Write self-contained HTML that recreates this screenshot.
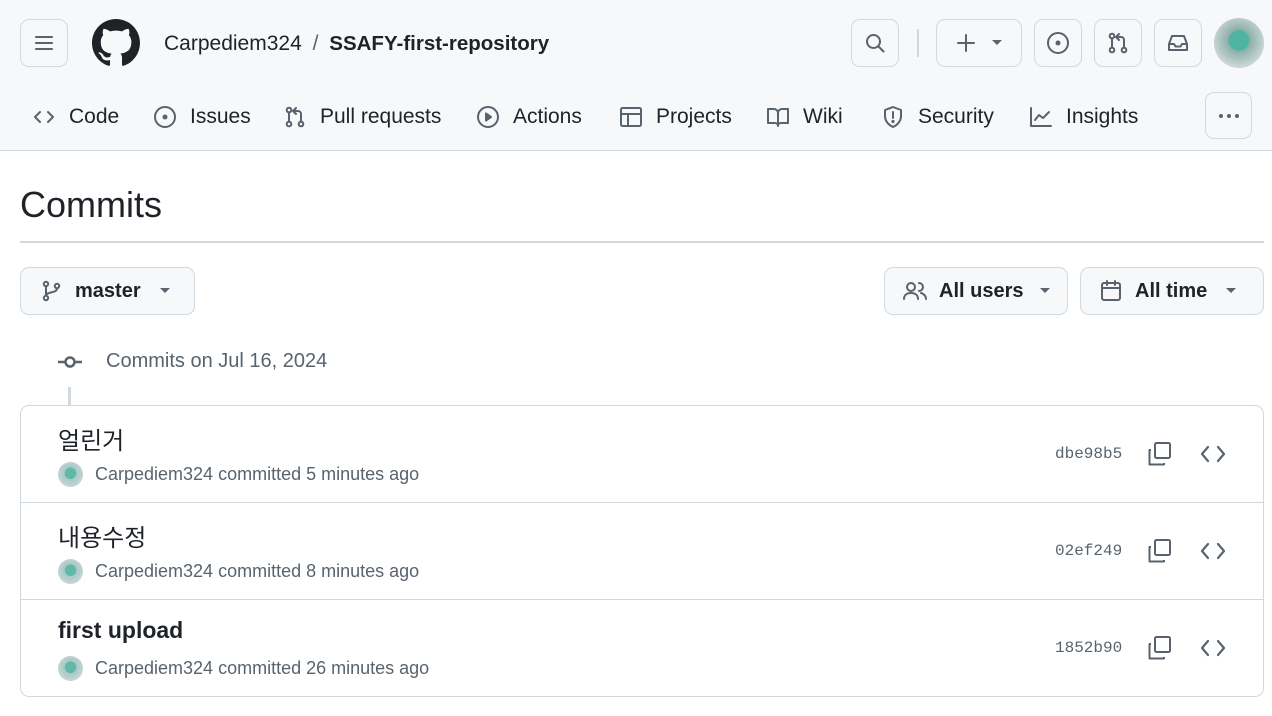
<!DOCTYPE html>
<html><head><meta charset="utf-8"><style>
*{box-sizing:border-box;margin:0;padding:0}
body{width:1272px;height:716px;overflow:hidden;background:#fff;font-family:"Liberation Sans","Noto Sans CJK KR",sans-serif;color:#1f2328;position:relative}
.a{position:absolute}
.hdr{left:0;top:0;width:1272px;height:151px;background:#f6f8fa;border-bottom:1.5px solid #d1d9e0}
.btn{position:absolute;border:1.5px solid #d1d9e0;border-radius:9px;background:#f6f8fa;display:flex;align-items:center;justify-content:center}
svg{display:block}
.ic{fill:none;stroke:#59636e;stroke-width:2;stroke-linecap:round;stroke-linejoin:round}
.tab{position:absolute;top:105px;font-size:21px;color:#1f2328;display:flex;align-items:center;gap:13px}
.row{position:absolute;left:20px;width:1244px;height:97px;border-top:1.5px solid #d1d9e0}
.t{position:absolute;left:37px;top:15px;font-size:24px}
.m{position:absolute;left:37px;top:56px;font-size:18px;color:#59636e;display:flex;align-items:center;gap:12px}
.av{width:25px;height:25px;border-radius:50%;background:radial-gradient(circle at 50% 45%,#5fb8a8 0 30%,#a9c8c6 32%,#d8e0e0 100%)}
.h{position:absolute;left:1034px;top:39px;font-family:"Liberation Mono",monospace;font-size:16px;color:#59636e}
.cp{position:absolute;left:1126px;top:35px}
.cd{position:absolute;left:1179px;top:37px}
</style></head><body>
<div class="a hdr"></div>
<div class="btn" style="left:20px;top:19px;width:48px;height:48px"><svg width="24" height="24" class="ic"><path d="M4 6h16M4 12h16M4 18h16"/></svg></div>
<svg class="a" style="left:92px;top:19px" width="48" height="48" viewBox="0 0 16 16"><path fill="#1f2328" d="M8 0C3.58 0 0 3.58 0 8c0 3.54 2.29 6.53 5.47 7.590.4.07.55-.17.55-.38 0-.19-.01-.82-.01-1.49-2.01.37-2.53-.49-2.69-.94-.09-.23-.48-.94-.82-1.13-.28-.15-.68-.52-.01-.53.63-.01 1.08.58 1.23.82.72 1.21 1.87.87 2.33.66.07-.52.28-.87.51-1.07-1.78-.2-3.64-.89-3.64-3.95 0-.87.31-1.59.82-2.15-.08-.2-.36-1.02.08-2.12 0 0 .67-.21 2.2.82.64-.18 1.32-.27 2-.27.68 0 1.36.09 2 .27 1.53-1.04 2.2-.82 2.2-.82.44 1.1.16 1.92.08 2.12.51.56.82 1.27.82 2.15 0 3.07-1.87 3.75-3.65 3.95.29.25.54.73.54 1.48 0 1.07-.01 1.93-.01 2.2 0 .21.15.46.55.38A8.013 8.013 0 0016 8c0-4.42-3.58-8-8-8z"/></svg>
<div class="a" style="left:164px;top:32px;font-size:21px">Carpediem324 <span style="color:#59636e;margin:0 5px">/</span> <b style="font-weight:600;font-size:20.5px">SSAFY-first-repository</b></div>
<div class="btn" style="left:851px;top:19px;width:48px;height:48px"><svg width="24" height="24" class="ic"><circle cx="10.5" cy="10.5" r="6.5"/><path d="M15.5 15.5l5 5"/></svg></div>
<div class="a" style="left:917px;top:29px;width:1.5px;height:28px;background:#d1d9e0"></div>
<div class="btn" style="left:936px;top:19px;width:86px;height:48px;gap:14px"><svg width="22" height="22" class="ic"><path d="M11 3v16M3 11h16"/></svg><svg width="12" height="8"><path d="M1 1h10L6 6z" fill="#59636e"/></svg></div>
<div class="btn" style="left:1034px;top:19px;width:48px;height:48px"><svg width="24" height="24" class="ic"><circle cx="12" cy="12" r="10"/><circle cx="12" cy="12" r="1.5" fill="#59636e"/></svg></div>
<div class="btn" style="left:1094px;top:19px;width:48px;height:48px"><svg width="24" height="24" class="ic"><circle cx="6" cy="5" r="2.3"/><circle cx="6" cy="19" r="2.3"/><circle cx="18" cy="19" r="2.3"/><path d="M6 7.5v9M18 16.5V9a3 3 0 00-3-3h-4M13 3l-3 3 3 3"/></svg></div>
<div class="btn" style="left:1154px;top:19px;width:48px;height:48px"><svg width="24" height="24" class="ic"><path d="M3 13l3-8h12l3 8v6H3zM3 13h5l1.5 2.5h5L16 13h5"/></svg></div>
<div class="a" style="left:1214px;top:18px;width:50px;height:50px;border-radius:50%;background:radial-gradient(circle at 50% 45%,#4fb3a1 0 26%,#8fb0aa 30%,#c9d6d4 70%,#d9d4c8 100%)"></div>
<div class="tab" style="left:32px"><svg width="24" height="24" class="ic"><path d="M8 7l-5 5 5 5M16 7l5 5-5 5"/></svg>Code</div>
<div class="tab" style="left:153px"><svg width="24" height="24" class="ic"><circle cx="12" cy="12" r="10"/><circle cx="12" cy="12" r="1.5" fill="#59636e"/></svg>Issues</div>
<div class="tab" style="left:283px"><svg width="24" height="24" class="ic"><circle cx="6" cy="5" r="2.3"/><circle cx="6" cy="19" r="2.3"/><circle cx="18" cy="19" r="2.3"/><path d="M6 7.5v9M18 16.5V9a3 3 0 00-3-3h-4M13 3l-3 3 3 3"/></svg>Pull requests</div>
<div class="tab" style="left:476px"><svg width="24" height="24" class="ic"><circle cx="12" cy="12" r="10"/><path d="M10 8.5l5 3.5-5 3.5z" fill="#59636e"/></svg>Actions</div>
<div class="tab" style="left:619px"><svg width="24" height="24" class="ic"><rect x="2" y="3" width="20" height="18" rx="1.5"/><path d="M2 9h20M9 9v12"/></svg>Projects</div>
<div class="tab" style="left:766px"><svg width="24" height="24" class="ic"><path d="M2 4h6a4 4 0 014 4v13a3 3 0 00-3-3H2zM22 4h-6a4 4 0 00-4 4v13a3 3 0 013-3h7z"/></svg>Wiki</div>
<div class="tab" style="left:881px"><svg width="24" height="24" class="ic"><path d="M12 2l8 3v6c0 5-3.5 9-8 11-4.5-2-8-6-8-11V5z"/><path d="M12 7v6"/><circle cx="12" cy="16.5" r=".6" fill="#59636e"/></svg>Security</div>
<div class="tab" style="left:1029px"><svg width="24" height="24" class="ic"><path d="M2 3v18h20M6 15l4-5 4 3 6-6"/></svg>Insights</div>
<div class="btn" style="left:1205px;top:92px;width:47px;height:47px"><svg width="24" height="6"><circle cx="4" cy="3" r="2" fill="#59636e"/><circle cx="12" cy="3" r="2" fill="#59636e"/><circle cx="20" cy="3" r="2" fill="#59636e"/></svg></div>

<div class="a" style="left:20px;top:184px;font-size:36px">Commits</div>
<div class="a" style="left:20px;top:241px;width:1244px;height:1.5px;background:#d1d9e0"></div>
<div class="btn" style="left:20px;top:267px;width:175px;height:48px;justify-content:flex-start;padding-left:20px;gap:12px;font-size:20px;font-weight:600;color:#1f2328"><svg width="22" height="22" class="ic"><circle cx="5" cy="4" r="2.2"/><circle cx="5" cy="18" r="2.2"/><circle cx="16" cy="6" r="2.2"/><path d="M5 6.5v9M16 8.5c0 5-11 3-11 7"/></svg>master<svg style="margin-left:6px" width="12" height="8"><path d="M1 1h10L6 6z" fill="#59636e"/></svg></div>
<div class="btn" style="left:884px;top:267px;width:184px;height:48px;justify-content:flex-start;padding-left:18px;gap:12px;font-size:20px;font-weight:600"><svg width="24" height="22" class="ic"><circle cx="8" cy="7" r="4"/><path d="M1 19c0-4 3-6 7-6s7 2 7 6M16 3a4 4 0 010 8M18 13c3 1 5 3 5 6"/></svg>All users<svg style="margin-left:4px" width="12" height="8"><path d="M1 1h10L6 6z" fill="#59636e"/></svg></div>
<div class="btn" style="left:1080px;top:267px;width:184px;height:48px;justify-content:flex-start;padding-left:18px;gap:12px;font-size:20px;font-weight:600"><svg width="24" height="24" class="ic"><rect x="3" y="4" width="18" height="17" rx="2"/><path d="M3 9h18M8 2v4M16 2v4"/></svg>All time<svg style="margin-left:6px" width="12" height="8"><path d="M1 1h10L6 6z" fill="#59636e"/></svg></div>

<svg class="a" style="left:57px;top:352px" width="26" height="20"><path d="M1 10h7M18 10h7" stroke="#59636e" stroke-width="2.5"/><circle cx="13" cy="10" r="4.5" fill="none" stroke="#59636e" stroke-width="2.5"/></svg>
<div class="a" style="left:106px;top:350px;font-size:20px;color:#59636e">Commits on Jul 16, 2024</div>
<div class="a" style="left:68px;top:387px;width:3px;height:19px;background:#d1d9e0"></div>

<div class="a" style="left:20px;top:405px;width:1244px;height:292px;border:1.5px solid #d1d9e0;border-radius:9px;overflow:hidden">
 <div class="row" style="left:0;top:0;border-top:none">
  <div class="t">얼린거</div><div class="m"><div class="av"></div>Carpediem324 committed 5 minutes ago</div>
  <div class="h">dbe98b5</div>
  <svg class="cp" width="26" height="26"><g fill="none" stroke="#59636e" stroke-width="2" stroke-linejoin="round"><path d="M4 9H2.5v14.5H17V22"/><rect x="8" y="2" width="15" height="15" rx="1.5"/></g></svg>
  <svg class="cd" width="26" height="22"><path d="M8 4l-6 7 6 7M18 4l6 7-6 7" fill="none" stroke="#59636e" stroke-width="2.2" stroke-linecap="round" stroke-linejoin="round"/></svg>
 </div>
 <div class="row" style="left:0;top:96px">
  <div class="t">내용수정</div><div class="m"><div class="av"></div>Carpediem324 committed 8 minutes ago</div>
  <div class="h">02ef249</div>
  <svg class="cp" width="26" height="26"><g fill="none" stroke="#59636e" stroke-width="2" stroke-linejoin="round"><path d="M4 9H2.5v14.5H17V22"/><rect x="8" y="2" width="15" height="15" rx="1.5"/></g></svg>
  <svg class="cd" width="26" height="22"><path d="M8 4l-6 7 6 7M18 4l6 7-6 7" fill="none" stroke="#59636e" stroke-width="2.2" stroke-linecap="round" stroke-linejoin="round"/></svg>
 </div>
 <div class="row" style="left:0;top:193px">
  <div class="t" style="font-weight:600;font-size:23px;top:17px">first upload</div><div class="m"><div class="av"></div>Carpediem324 committed 26 minutes ago</div>
  <div class="h">1852b90</div>
  <svg class="cp" width="26" height="26"><g fill="none" stroke="#59636e" stroke-width="2" stroke-linejoin="round"><path d="M4 9H2.5v14.5H17V22"/><rect x="8" y="2" width="15" height="15" rx="1.5"/></g></svg>
  <svg class="cd" width="26" height="22"><path d="M8 4l-6 7 6 7M18 4l6 7-6 7" fill="none" stroke="#59636e" stroke-width="2.2" stroke-linecap="round" stroke-linejoin="round"/></svg>
 </div>
</div>
</body></html>
